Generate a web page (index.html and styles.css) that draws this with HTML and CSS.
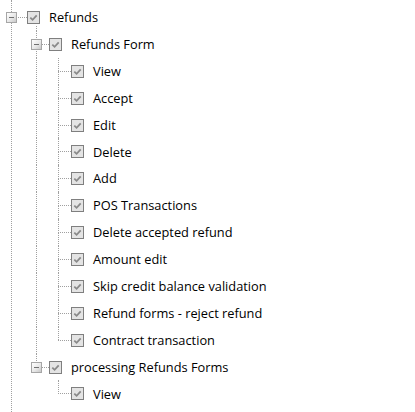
FILE: index.html
```html
<!DOCTYPE html>
<html>
<head>
<meta charset="utf-8">
<link rel="stylesheet" href="styles.css">
</head>
<body>
<div class="page">
  <div class="trunk"></div>
  <div class="tree">
    <div class="row">
      <span class="conn root"><i class="h"></i><i class="exp"><b></b></i><i class="kid"></i></span>
      <span class="cb"><svg width="13" height="13" viewBox="0 0 13 13"><rect x="0.5" y="0.5" width="12" height="12" fill="#e4e4e4" stroke="#7f7f7f"/><path d="M3.3 6.6 L5.6 8.8 L9.7 4.4" fill="none" stroke="#8a8a8a" stroke-width="1.8"/></svg></span>
      <span class="label">Refunds</span>
    </div>

    <div class="row">
      <span class="guide"></span>
      <span class="conn"><i class="vt"></i><i class="vb"></i><i class="h"></i><i class="exp"><b></b></i></span>
      <span class="cb"><svg width="13" height="13" viewBox="0 0 13 13"><rect x="0.5" y="0.5" width="12" height="12" fill="#e4e4e4" stroke="#7f7f7f"/><path d="M3.3 6.6 L5.6 8.8 L9.7 4.4" fill="none" stroke="#8a8a8a" stroke-width="1.8"/></svg></span>
      <span class="label">Refunds Form</span>
    </div>

    <div class="row">
      <span class="guide"></span><span class="guide"><i class="vl"></i></span>
      <span class="conn"><i class="vt"></i><i class="vb"></i><i class="h"></i></span>
      <span class="cb"><svg width="13" height="13" viewBox="0 0 13 13"><rect x="0.5" y="0.5" width="12" height="12" fill="#e4e4e4" stroke="#7f7f7f"/><path d="M3.3 6.6 L5.6 8.8 L9.7 4.4" fill="none" stroke="#8a8a8a" stroke-width="1.8"/></svg></span>
      <span class="label">View</span>
    </div>
    <div class="row">
      <span class="guide"></span><span class="guide"><i class="vl"></i></span>
      <span class="conn"><i class="vt"></i><i class="vb"></i><i class="h"></i></span>
      <span class="cb"><svg width="13" height="13" viewBox="0 0 13 13"><rect x="0.5" y="0.5" width="12" height="12" fill="#e4e4e4" stroke="#7f7f7f"/><path d="M3.3 6.6 L5.6 8.8 L9.7 4.4" fill="none" stroke="#8a8a8a" stroke-width="1.8"/></svg></span>
      <span class="label">Accept</span>
    </div>
    <div class="row">
      <span class="guide"></span><span class="guide"><i class="vl"></i></span>
      <span class="conn"><i class="vt"></i><i class="vb"></i><i class="h"></i></span>
      <span class="cb"><svg width="13" height="13" viewBox="0 0 13 13"><rect x="0.5" y="0.5" width="12" height="12" fill="#e4e4e4" stroke="#7f7f7f"/><path d="M3.3 6.6 L5.6 8.8 L9.7 4.4" fill="none" stroke="#8a8a8a" stroke-width="1.8"/></svg></span>
      <span class="label">Edit</span>
    </div>
    <div class="row">
      <span class="guide"></span><span class="guide"><i class="vl"></i></span>
      <span class="conn"><i class="vt"></i><i class="vb"></i><i class="h"></i></span>
      <span class="cb"><svg width="13" height="13" viewBox="0 0 13 13"><rect x="0.5" y="0.5" width="12" height="12" fill="#e4e4e4" stroke="#7f7f7f"/><path d="M3.3 6.6 L5.6 8.8 L9.7 4.4" fill="none" stroke="#8a8a8a" stroke-width="1.8"/></svg></span>
      <span class="label">Delete</span>
    </div>
    <div class="row">
      <span class="guide"></span><span class="guide"><i class="vl"></i></span>
      <span class="conn"><i class="vt"></i><i class="vb"></i><i class="h"></i></span>
      <span class="cb"><svg width="13" height="13" viewBox="0 0 13 13"><rect x="0.5" y="0.5" width="12" height="12" fill="#e4e4e4" stroke="#7f7f7f"/><path d="M3.3 6.6 L5.6 8.8 L9.7 4.4" fill="none" stroke="#8a8a8a" stroke-width="1.8"/></svg></span>
      <span class="label">Add</span>
    </div>
    <div class="row">
      <span class="guide"></span><span class="guide"><i class="vl"></i></span>
      <span class="conn"><i class="vt"></i><i class="vb"></i><i class="h"></i></span>
      <span class="cb"><svg width="13" height="13" viewBox="0 0 13 13"><rect x="0.5" y="0.5" width="12" height="12" fill="#e4e4e4" stroke="#7f7f7f"/><path d="M3.3 6.6 L5.6 8.8 L9.7 4.4" fill="none" stroke="#8a8a8a" stroke-width="1.8"/></svg></span>
      <span class="label">POS Transactions</span>
    </div>
    <div class="row">
      <span class="guide"></span><span class="guide"><i class="vl"></i></span>
      <span class="conn"><i class="vt"></i><i class="vb"></i><i class="h"></i></span>
      <span class="cb"><svg width="13" height="13" viewBox="0 0 13 13"><rect x="0.5" y="0.5" width="12" height="12" fill="#e4e4e4" stroke="#7f7f7f"/><path d="M3.3 6.6 L5.6 8.8 L9.7 4.4" fill="none" stroke="#8a8a8a" stroke-width="1.8"/></svg></span>
      <span class="label">Delete accepted refund</span>
    </div>
    <div class="row">
      <span class="guide"></span><span class="guide"><i class="vl"></i></span>
      <span class="conn"><i class="vt"></i><i class="vb"></i><i class="h"></i></span>
      <span class="cb"><svg width="13" height="13" viewBox="0 0 13 13"><rect x="0.5" y="0.5" width="12" height="12" fill="#e4e4e4" stroke="#7f7f7f"/><path d="M3.3 6.6 L5.6 8.8 L9.7 4.4" fill="none" stroke="#8a8a8a" stroke-width="1.8"/></svg></span>
      <span class="label">Amount edit</span>
    </div>
    <div class="row">
      <span class="guide"></span><span class="guide"><i class="vl"></i></span>
      <span class="conn"><i class="vt"></i><i class="vb"></i><i class="h"></i></span>
      <span class="cb"><svg width="13" height="13" viewBox="0 0 13 13"><rect x="0.5" y="0.5" width="12" height="12" fill="#e4e4e4" stroke="#7f7f7f"/><path d="M3.3 6.6 L5.6 8.8 L9.7 4.4" fill="none" stroke="#8a8a8a" stroke-width="1.8"/></svg></span>
      <span class="label">Skip credit balance validation</span>
    </div>
    <div class="row">
      <span class="guide"></span><span class="guide"><i class="vl"></i></span>
      <span class="conn"><i class="vt"></i><i class="vb"></i><i class="h"></i></span>
      <span class="cb"><svg width="13" height="13" viewBox="0 0 13 13"><rect x="0.5" y="0.5" width="12" height="12" fill="#e4e4e4" stroke="#7f7f7f"/><path d="M3.3 6.6 L5.6 8.8 L9.7 4.4" fill="none" stroke="#8a8a8a" stroke-width="1.8"/></svg></span>
      <span class="label">Refund forms - reject refund</span>
    </div>
    <div class="row">
      <span class="guide"></span><span class="guide"><i class="vl"></i></span>
      <span class="conn"><i class="vt"></i><i class="h"></i></span>
      <span class="cb"><svg width="13" height="13" viewBox="0 0 13 13"><rect x="0.5" y="0.5" width="12" height="12" fill="#e4e4e4" stroke="#7f7f7f"/><path d="M3.3 6.6 L5.6 8.8 L9.7 4.4" fill="none" stroke="#8a8a8a" stroke-width="1.8"/></svg></span>
      <span class="label">Contract transaction</span>
    </div>

    <div class="row">
      <span class="guide"></span>
      <span class="conn"><i class="vt"></i><i class="h"></i><i class="exp"><b></b></i></span>
      <span class="cb"><svg width="13" height="13" viewBox="0 0 13 13"><rect x="0.5" y="0.5" width="12" height="12" fill="#e4e4e4" stroke="#7f7f7f"/><path d="M3.3 6.6 L5.6 8.8 L9.7 4.4" fill="none" stroke="#8a8a8a" stroke-width="1.8"/></svg></span>
      <span class="label">processing Refunds Forms</span>
    </div>
    <div class="row">
      <span class="guide"></span><span class="guide"></span>
      <span class="conn"><i class="vt"></i><i class="h"></i></span>
      <span class="cb"><svg width="13" height="13" viewBox="0 0 13 13"><rect x="0.5" y="0.5" width="12" height="12" fill="#e4e4e4" stroke="#7f7f7f"/><path d="M3.3 6.6 L5.6 8.8 L9.7 4.4" fill="none" stroke="#8a8a8a" stroke-width="1.8"/></svg></span>
      <span class="label">View</span>
    </div>
  </div>
</div>
</body>
</html>
```

FILE: styles.css
```css
html, body {
  margin: 0;
  padding: 0;
  background: #ffffff;
}

.page {
  display: grid;
  min-height: 100vh;
}

.trunk {
  grid-area: 1 / 1;
  margin-left: 11px;
  width: 0;
  border-left: 1px dotted #a0a0a0;
}

.tree {
  grid-area: 1 / 1;
  padding-top: 4px;
  font-family: "Open Sans", "Noto Sans", sans-serif;
  font-size: 12.8px;
  color: #000000;
}

.row {
  display: flex;
  align-items: center;
  height: 26.9px;
}

.guide {
  display: flex;
  width: 22px;
  height: 100%;
  flex: none;
}

.vl {
  margin-left: 14px;
  width: 0;
  height: 100%;
  border-left: 1px dotted #a0a0a0;
}

.conn {
  display: grid;
  width: 27px;
  height: 100%;
  flex: none;
}

.conn > i {
  grid-area: 1 / 1;
  display: block;
}

.vt, .vb {
  justify-self: start;
  margin-left: 14px;
  width: 0;
  height: 50%;
  border-left: 1px dotted #a0a0a0;
}

.vt { align-self: start; }
.vb { align-self: end; }

.h {
  align-self: center;
  justify-self: start;
  margin-left: 14px;
  width: 13px;
  height: 0;
  border-top: 1px dotted #a0a0a0;
}

.exp {
  align-self: center;
  justify-self: start;
  margin-left: 9px;
  width: 9px;
  height: 9px;
  border: 1px solid #a6a6a6;
  background: linear-gradient(135deg, #ffffff 0%, #e8e8e8 55%, #c8c8c8 100%);
  display: flex !important;
  align-items: center;
  justify-content: center;
}

.exp b {
  display: block;
  width: 5px;
  height: 1px;
  background: #707070;
}

.root .h {
  margin-left: 11px;
  width: 16px;
}

.root .exp {
  margin-left: 6px;
}

/* stub of the child line below the root's checkbox */
.root .kid {
  align-self: end;
  justify-self: start;
  margin-left: 36px;
  width: 0;
  height: 5px;
  border-left: 1px dotted #a0a0a0;
}

.cb {
  display: flex;
  flex: none;
  width: 13px;
  height: 13px;
  margin-right: 9px;
}

.label {
  white-space: nowrap;
  line-height: 1;
}
```
